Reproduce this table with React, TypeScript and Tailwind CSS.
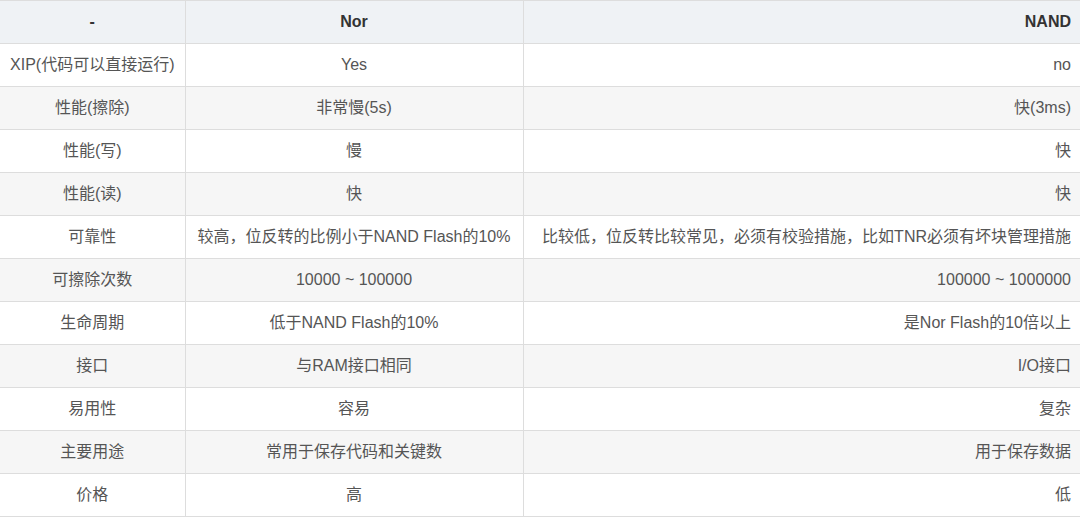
import React from 'react';

const rows: [string, string, string][] = [
  ['XIP(代码可以直接运行)', 'Yes', 'no'],
  ['性能(擦除)', '非常慢(5s)', '快(3ms)'],
  ['性能(写)', '慢', '快'],
  ['性能(读)', '快', '快'],
  ['可靠性', '较高，位反转的比例小于NAND Flash的10%', '比较低，位反转比较常见，必须有校验措施，比如TNR必须有坏块管理措施'],
  ['可擦除次数', '10000 ~ 100000', '100000 ~ 1000000'],
  ['生命周期', '低于NAND Flash的10%', '是Nor Flash的10倍以上'],
  ['接口', '与RAM接口相同', 'I/O接口'],
  ['易用性', '容易', '复杂'],
  ['主要用途', '常用于保存代码和关键数', '用于保存数据'],
  ['价格', '高', '低'],
];

export default function App() {
  return (
    <div className="w-[1080px] h-[518px] overflow-hidden bg-white font-['Liberation_Sans','Noto_Sans_CJK_SC',sans-serif] text-[16px] text-[#555]">
      <table className="w-[1080px] border-collapse table-fixed">
        <colgroup>
          <col className="w-[185px]" />
          <col className="w-[338px]" />
          <col className="w-[557px]" />
        </colgroup>
        <thead>
          <tr className="h-[43px] bg-[#eff2f5] border-t border-b border-[#dddddd]">
            <th className="border-r border-[#dddddd] text-center font-bold text-[#333] px-2">-</th>
            <th className="border-r border-[#dddddd] text-center font-bold text-[#333] px-2">Nor</th>
            <th className="text-right font-bold text-[#333] pr-[9px] pl-2">NAND</th>
          </tr>
        </thead>
        <tbody>
          {rows.map((r, i) => (
            <tr
              key={i}
              className={`h-[43px] border-b border-[#dddddd] ${i % 2 === 1 ? 'bg-[#f6f6f6]' : 'bg-white'}`}
            >
              <td className="border-r border-[#dddddd] text-center px-2 whitespace-nowrap">{r[0]}</td>
              <td className="border-r border-[#dddddd] text-center px-2 whitespace-nowrap">{r[1]}</td>
              <td className="text-right pr-[9px] pl-2 whitespace-nowrap">{r[2]}</td>
            </tr>
          ))}
        </tbody>
      </table>
    </div>
  );
}
